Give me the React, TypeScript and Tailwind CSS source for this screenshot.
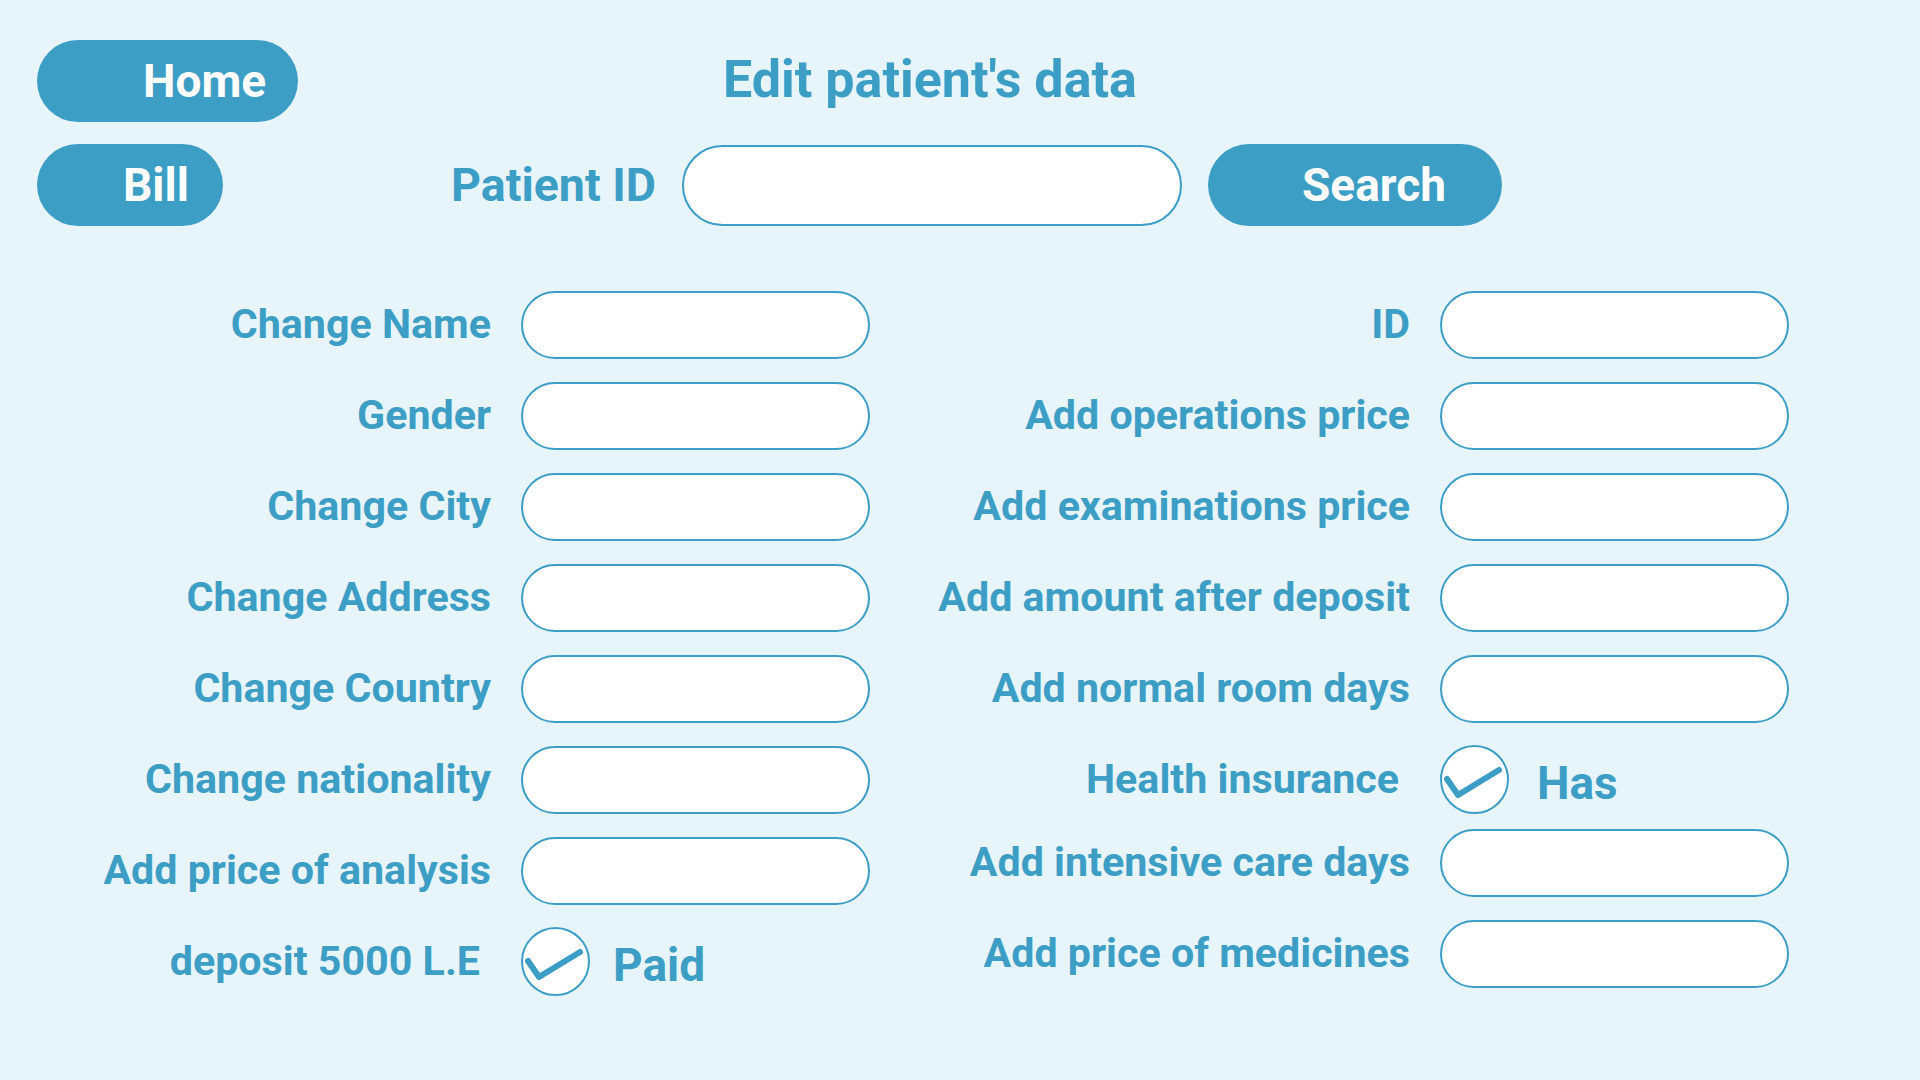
import React from "react";

const C = "#3c9ec5";

function Field({ label }: { label: string }) {
  return (
    <div className="flex items-center h-[68px]">
      <div className="flex-1 text-right text-[41.2px] leading-none font-bold text-[#3c9ec5] whitespace-nowrap">{label}</div>
      <div className="ml-[30px] w-[349px] h-[68px] rounded-full border-2 border-[#3c9ec5] bg-white" />
    </div>
  );
}

function Check() {
  return (
    <svg width="69" height="69" viewBox="0 0 69 69" className="shrink-0">
      <ellipse cx="34.5" cy="34.5" rx="33.5" ry="33.5" fill="white" stroke={C} strokeWidth="2" />
      <path d="M7 34 L18 50 L59 25" fill="none" stroke={C} strokeWidth="6" strokeLinecap="round" strokeLinejoin="round" />
    </svg>
  );
}

function CheckRow({ label, text, gap }: { label: string; text: string; gap: string }) {
  return (
    <div className="flex items-center h-[69px]">
      <div className="flex-1 text-right text-[41.2px] leading-none font-bold text-[#3c9ec5] whitespace-nowrap pr-[11px]">{label}</div>
      <div className="ml-[30px] flex items-center w-[349px]">
        <Check />
        <span className={`${gap} mt-[7px] text-[46px] leading-none font-bold text-[#3c9ec5]`}>{text}</span>
      </div>
    </div>
  );
}

export default function App() {
  return (
    <div
      className="w-full h-[1080px] bg-[#e7f4fa] pl-[37px] pt-[40px] overflow-hidden"
      style={{ fontFamily: "Roboto, 'Noto Sans', sans-serif" }}
    >
      <div className="flex items-center h-[82px]">
        <button className="w-[261px] h-[82px] rounded-full bg-[#3c9ec5] text-white text-[46px] font-bold leading-none text-left pl-[106px]">
          Home
        </button>
        <h1 className="ml-[425px] text-[52px] font-bold leading-none text-[#3c9ec5] mt-[-2px]">Edit patient's data</h1>
      </div>
      <div className="flex items-center h-[82px] mt-[22px]">
        <button className="w-[186px] h-[82px] rounded-full bg-[#3c9ec5] text-white text-[46px] font-bold leading-none text-left pl-[86px]">
          Bill
        </button>
        <div className="w-[433px] text-right text-[46.5px] font-bold leading-none text-[#3c9ec5]">Patient ID</div>
        <div className="ml-[26px] w-[500px] h-[81px] rounded-full border-2 border-[#3c9ec5] bg-white" />
        <button className="ml-[26px] w-[294px] h-[82px] rounded-full bg-[#3c9ec5] text-white text-[46px] font-bold leading-none text-left pl-[94px]">
          Search
        </button>
      </div>
      <div className="flex mt-[65px]">
        <div className="w-[833px] flex flex-col gap-[23px]">
          <Field label="Change Name" />
          <Field label="Gender" />
          <Field label="Change City" />
          <Field label="Change Address" />
          <Field label="Change Country" />
          <Field label="Change nationality" />
          <Field label="Add price of analysis" />
          <div className="mt-[-1px]">
            <CheckRow label="deposit 5000 L.E" text="Paid" gap="ml-[23px]" />
          </div>
        </div>
        <div className="w-[919px] flex flex-col">
          <div className="flex flex-col gap-[23px]">
            <Field label="ID" />
            <Field label="Add operations price" />
            <Field label="Add examinations price" />
            <Field label="Add amount after deposit" />
            <Field label="Add normal room days" />
          </div>
          <div className="mt-[22px]">
            <CheckRow label="Health insurance" text="Has" gap="ml-[28px]" />
          </div>
          <div className="mt-[15px] flex flex-col gap-[23px]">
            <Field label="Add intensive care days" />
            <Field label="Add price of medicines" />
          </div>
        </div>
      </div>
    </div>
  );
}
